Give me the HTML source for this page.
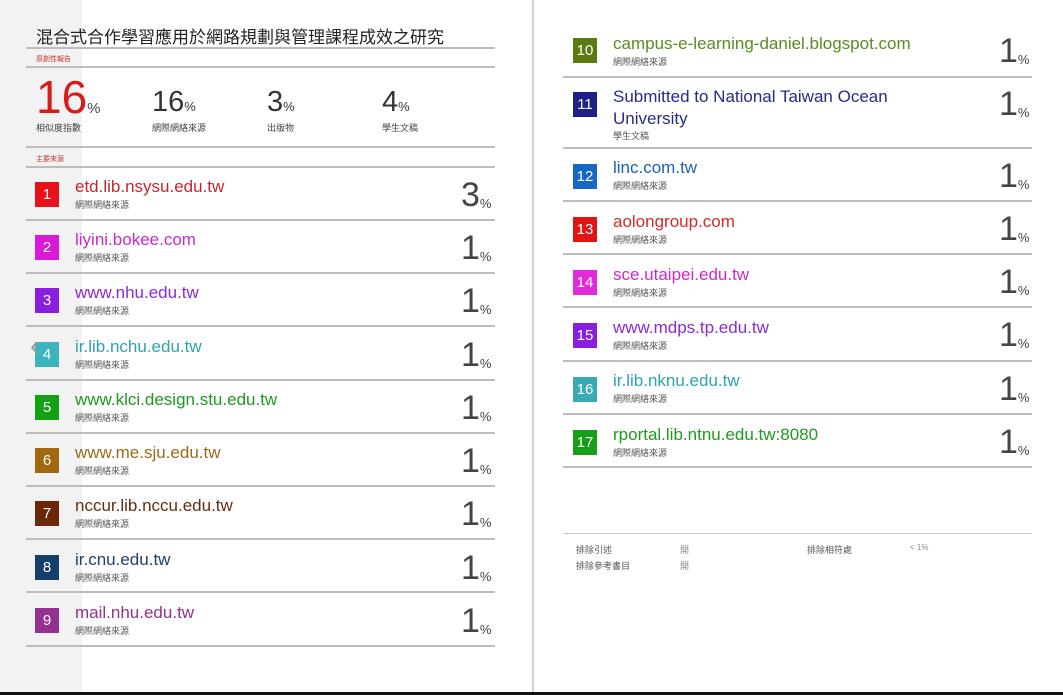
<!DOCTYPE html>
<html><head><meta charset="utf-8"><style>
*{margin:0;padding:0;box-sizing:border-box}
body{width:1063px;height:695px;overflow:hidden;background:#fff;position:relative;font-family:"Liberation Sans","Noto Sans CJK TC",sans-serif;color:#333}
.a{position:absolute;white-space:nowrap}
.strip{position:absolute;left:0;top:0;width:82px;height:695px;background:#f2f2f2}
.vl{position:absolute;left:532px;top:0;width:2px;height:695px;background:#d4d4d4}
.bot{position:absolute;left:0;top:692px;width:1063px;height:3px;background:#111}
.hl{position:absolute;height:2px;background:#bdbdbd}
.b{position:absolute;width:24px;height:25px;color:#fff;font-size:15px;text-align:center;line-height:25px}
.t{position:absolute;font-size:17px;line-height:20px;white-space:nowrap}
.s{position:absolute;font-size:9px;color:#555;white-space:nowrap}
.p{position:absolute;font-size:34px;line-height:34px;color:#444}
.p small{font-size:13px;position:relative;top:2px}
</style></head><body>
<div class="strip"></div>
<div class="vl"></div>
<div class="bot"></div>

<div class="a" style="left:36px;top:23px;font-size:17px;color:#222">混合式合作學習應用於網路規劃與管理課程成效之研究</div>
<div class="hl" style="left:26px;top:47px;width:469px"></div>
<div class="a" style="left:36px;top:54px;font-size:7px;color:#c33">原創性報告</div>
<div class="hl" style="left:26px;top:66px;width:469px"></div>
<div class="a" style="left:36px;top:74px;font-size:46px;line-height:46px;color:#d81b1b">16<span style="font-size:15px;color:#444">%</span></div>
<div class="a" style="left:36px;top:121px;font-size:9px;color:#444">相似度指數</div>
<div class="a" style="left:152px;top:88px;font-size:29px;line-height:29px;color:#333">16<span style="font-size:13px">%</span></div>
<div class="a" style="left:152px;top:121px;font-size:9px;color:#444">網際網絡來源</div>
<div class="a" style="left:267px;top:88px;font-size:29px;line-height:29px;color:#333">3<span style="font-size:13px">%</span></div>
<div class="a" style="left:267px;top:121px;font-size:9px;color:#444">出版物</div>
<div class="a" style="left:382px;top:88px;font-size:29px;line-height:29px;color:#333">4<span style="font-size:13px">%</span></div>
<div class="a" style="left:382px;top:121px;font-size:9px;color:#444">學生文稿</div>
<div class="hl" style="left:26px;top:146px;width:469px"></div>
<div class="a" style="left:36px;top:154px;font-size:7px;color:#c33">主要來源</div>
<div class="hl" style="left:26px;top:166px;width:469px"></div>

<div class="b" style="left:35px;top:182px;background:#e8111a">1</div><div class="t" style="left:75px;top:177px;color:#c8262e">etd.lib.nsysu.edu.tw</div><div class="s" style="left:75px;top:198px">網際網絡來源</div><div class="p" style="left:461px;top:178px">3<small>%</small></div>
<div class="hl" style="left:26px;top:219px;width:469px"></div>
<div class="b" style="left:35px;top:235px;background:#d81ad8">2</div><div class="t" style="left:75px;top:230px;color:#cc2acb">liyini.bokee.com</div><div class="s" style="left:75px;top:251px">網際網絡來源</div><div class="p" style="left:461px;top:231px">1<small>%</small></div>
<div class="hl" style="left:26px;top:272px;width:469px"></div>
<div class="b" style="left:35px;top:288px;background:#8a1ee0">3</div><div class="t" style="left:75px;top:283px;color:#8a2bd6">www.nhu.edu.tw</div><div class="s" style="left:75px;top:304px">網際網絡來源</div><div class="p" style="left:461px;top:284px">1<small>%</small></div>
<div class="hl" style="left:26px;top:325px;width:469px"></div>
<div class="b" style="left:35px;top:342px;background:#3cb4bc">4</div><div class="t" style="left:75px;top:337px;color:#2ea3ad">ir.lib.nchu.edu.tw</div><div class="s" style="left:75px;top:358px">網際網絡來源</div><div class="p" style="left:461px;top:338px">1<small>%</small></div>
<div class="a" style="left:30px;top:332px;font-size:28px;color:#999;line-height:28px">‹</div>
<div class="hl" style="left:26px;top:379px;width:469px"></div>
<div class="b" style="left:35px;top:395px;background:#13a013">5</div><div class="t" style="left:75px;top:390px;color:#1e9a1e">www.klci.design.stu.edu.tw</div><div class="s" style="left:75px;top:411px">網際網絡來源</div><div class="p" style="left:461px;top:391px">1<small>%</small></div>
<div class="hl" style="left:26px;top:432px;width:469px"></div>
<div class="b" style="left:35px;top:448px;background:#a2680e">6</div><div class="t" style="left:75px;top:443px;color:#9c6a1a">www.me.sju.edu.tw</div><div class="s" style="left:75px;top:464px">網際網絡來源</div><div class="p" style="left:461px;top:444px">1<small>%</small></div>
<div class="hl" style="left:26px;top:485px;width:469px"></div>
<div class="b" style="left:35px;top:501px;background:#6a2808">7</div><div class="t" style="left:75px;top:496px;color:#6a2c10">nccur.lib.nccu.edu.tw</div><div class="s" style="left:75px;top:517px">網際網絡來源</div><div class="p" style="left:461px;top:497px">1<small>%</small></div>
<div class="hl" style="left:26px;top:538px;width:469px"></div>
<div class="b" style="left:35px;top:555px;background:#143f6c">8</div><div class="t" style="left:75px;top:550px;color:#1d3f6c">ir.cnu.edu.tw</div><div class="s" style="left:75px;top:571px">網際網絡來源</div><div class="p" style="left:461px;top:551px">1<small>%</small></div>
<div class="hl" style="left:26px;top:591px;width:469px"></div>
<div class="b" style="left:35px;top:608px;background:#94308f">9</div><div class="t" style="left:75px;top:603px;color:#92318e">mail.nhu.edu.tw</div><div class="s" style="left:75px;top:624px">網際網絡來源</div><div class="p" style="left:461px;top:604px">1<small>%</small></div>
<div class="hl" style="left:26px;top:645px;width:469px"></div>

<div class="b" style="left:573px;top:38px;background:#5b7a12">10</div><div class="t" style="left:613px;top:34px;color:#5b8a22">campus-e-learning-daniel.blogspot.com</div><div class="s" style="left:613px;top:55px">網際網絡來源</div><div class="p" style="left:999px;top:34px">1<small>%</small></div>
<div class="hl" style="left:563px;top:76px;width:469px"></div>
<div class="b" style="left:573px;top:92px;background:#1f1f88">11</div><div class="t" style="left:613px;top:87px;color:#2a2a86">Submitted to National Taiwan Ocean</div><div class="t" style="left:613px;top:109px;color:#2a2a86">University</div><div class="s" style="left:613px;top:129px">學生文稿</div><div class="p" style="left:999px;top:87px">1<small>%</small></div>
<div class="hl" style="left:563px;top:147px;width:469px"></div>
<div class="b" style="left:573px;top:164px;background:#1767c8">12</div><div class="t" style="left:613px;top:158px;color:#1a62b8">linc.com.tw</div><div class="s" style="left:613px;top:179px">網際網絡來源</div><div class="p" style="left:999px;top:159px">1<small>%</small></div>
<div class="hl" style="left:563px;top:200px;width:469px"></div>
<div class="b" style="left:573px;top:217px;background:#e21414">13</div><div class="t" style="left:613px;top:212px;color:#d42a2a">aolongroup.com</div><div class="s" style="left:613px;top:233px">網際網絡來源</div><div class="p" style="left:999px;top:212px">1<small>%</small></div>
<div class="hl" style="left:563px;top:253px;width:469px"></div>
<div class="b" style="left:573px;top:270px;background:#e22bd8">14</div><div class="t" style="left:613px;top:265px;color:#cc2acb">sce.utaipei.edu.tw</div><div class="s" style="left:613px;top:286px">網際網絡來源</div><div class="p" style="left:999px;top:265px">1<small>%</small></div>
<div class="hl" style="left:563px;top:306px;width:469px"></div>
<div class="b" style="left:573px;top:323px;background:#8a1ee0">15</div><div class="t" style="left:613px;top:318px;color:#8a2bd6">www.mdps.tp.edu.tw</div><div class="s" style="left:613px;top:339px">網際網絡來源</div><div class="p" style="left:999px;top:318px">1<small>%</small></div>
<div class="hl" style="left:563px;top:360px;width:469px"></div>
<div class="b" style="left:573px;top:377px;background:#3aa9b6">16</div><div class="t" style="left:613px;top:371px;color:#2ea3ad">ir.lib.nknu.edu.tw</div><div class="s" style="left:613px;top:392px">網際網絡來源</div><div class="p" style="left:999px;top:372px">1<small>%</small></div>
<div class="hl" style="left:563px;top:413px;width:469px"></div>
<div class="b" style="left:573px;top:430px;background:#17a017">17</div><div class="t" style="left:613px;top:425px;color:#1e9a1e">rportal.lib.ntnu.edu.tw:8080</div><div class="s" style="left:613px;top:446px">網際網絡來源</div><div class="p" style="left:999px;top:425px">1<small>%</small></div>
<div class="hl" style="left:563px;top:466px;width:469px"></div>

<div class="hl" style="left:563px;top:533px;width:469px;height:1px;background:#ccc"></div>
<div class="a" style="left:576px;top:543px;font-size:9px;color:#555">排除引述</div>
<div class="a" style="left:680px;top:543px;font-size:9px;color:#888">開</div>
<div class="a" style="left:807px;top:543px;font-size:9px;color:#555">排除相符處</div>
<div class="a" style="left:910px;top:543px;font-size:8px;color:#888">&lt; 1%</div>
<div class="a" style="left:576px;top:559px;font-size:9px;color:#555">排除參考書目</div>
<div class="a" style="left:680px;top:559px;font-size:9px;color:#888">開</div>
</body></html>
